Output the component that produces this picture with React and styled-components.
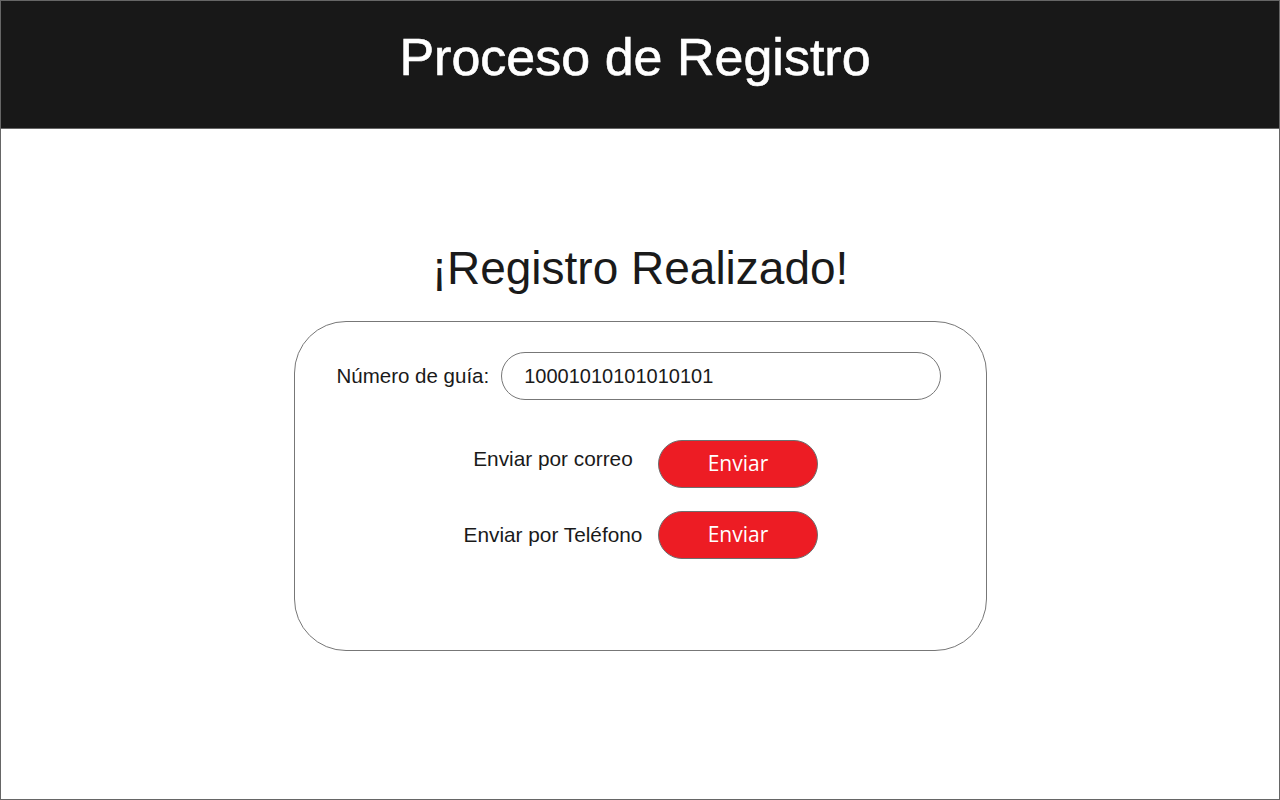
import styled, { createGlobalStyle } from 'styled-components'

const GlobalStyle = createGlobalStyle`
  html, body {
    margin: 0;
    padding: 0;
    background: #ffffff;
  }

  * {
    box-sizing: border-box;
  }
`

const Frame = styled.div`
  width: 1280px;
  height: 800px;
  border: 1px solid #666666;
  display: flex;
  flex-direction: column;
  font-family: "Liberation Sans", Arial, sans-serif;
  color: #1a1a1a;
  overflow: hidden;
`

const Header = styled.header`
  height: 128px;
  flex-shrink: 0;
  background: #181818;
  border-bottom: 1px solid #666666;
  display: flex;
  align-items: center;
  justify-content: center;
  padding: 0 10px 16px 0;
`

const HeaderTitle = styled.h1`
  margin: 0;
  color: #ffffff;
  font-size: 52px;
  font-weight: 400;
  -webkit-text-stroke: 0.6px #ffffff;
`

const Main = styled.main`
  flex: 1;
  display: flex;
  flex-direction: column;
  align-items: center;
  padding-top: 113px;
`

const Heading = styled.h2`
  margin: 0 0 27px;
  font-size: 46px;
  font-weight: 400;
  line-height: 52px;
  color: #1a1a1a;
`

const Card = styled.section`
  width: 693px;
  height: 330px;
  border: 1px solid #777777;
  border-radius: 52px;
  padding: 30px 45px 0 42px;
  display: flex;
  flex-direction: column;
`

const GuideRow = styled.div`
  display: flex;
  align-items: center;
  gap: 12px;
`

const Label = styled.span`
  font-size: 20.5px;
  color: #1a1a1a;
  white-space: nowrap;
`

const GuideInput = styled.div`
  flex: 1;
  height: 48px;
  border: 1px solid #777777;
  border-radius: 24px;
  display: flex;
  align-items: center;
  padding-left: 22px;
  font-size: 20px;
  color: #1a1a1a;
`

const SendList = styled.div`
  margin-top: 40px;
  display: grid;
  grid-template-columns: 192px 160px;
  justify-content: center;
  align-items: center;
  column-gap: 9px;
  row-gap: 23px;
  padding-right: 2px;
`

const SendLabel = styled(Label)`
  font-size: 20.8px;
  text-align: center;
  padding-bottom: ${props => (props.$raised ? '10px' : '0')};
`

const SendButton = styled.button`
  width: 160px;
  height: 48px;
  border: 1px solid #6e6e6e;
  border-radius: 24px;
  background: #ed1c24;
  color: #ffffff;
  font-family: "Open Sans", sans-serif;
  font-size: 21px;
  cursor: pointer;
  padding: 0 0 2px;
`

const options = [
  { id: 'correo', label: 'Enviar por correo', raised: true },
  { id: 'telefono', label: 'Enviar por Teléfono', raised: false },
]

const App = () => (
  <>
    <GlobalStyle />
    <Frame>
      <Header>
        <HeaderTitle>Proceso de Registro</HeaderTitle>
      </Header>

      <Main>
        <Heading>¡Registro Realizado!</Heading>

        <Card>
          <GuideRow>
            <Label>Número de guía:</Label>
            <GuideInput>10001010101010101</GuideInput>
          </GuideRow>

          <SendList>
            {options.map(option => [
              <SendLabel key={option.id + '-label'} $raised={option.raised}>
                {option.label}
              </SendLabel>,
              <SendButton key={option.id + '-button'}>Enviar</SendButton>,
            ])}
          </SendList>
        </Card>
      </Main>
    </Frame>
  </>
)

export default App
